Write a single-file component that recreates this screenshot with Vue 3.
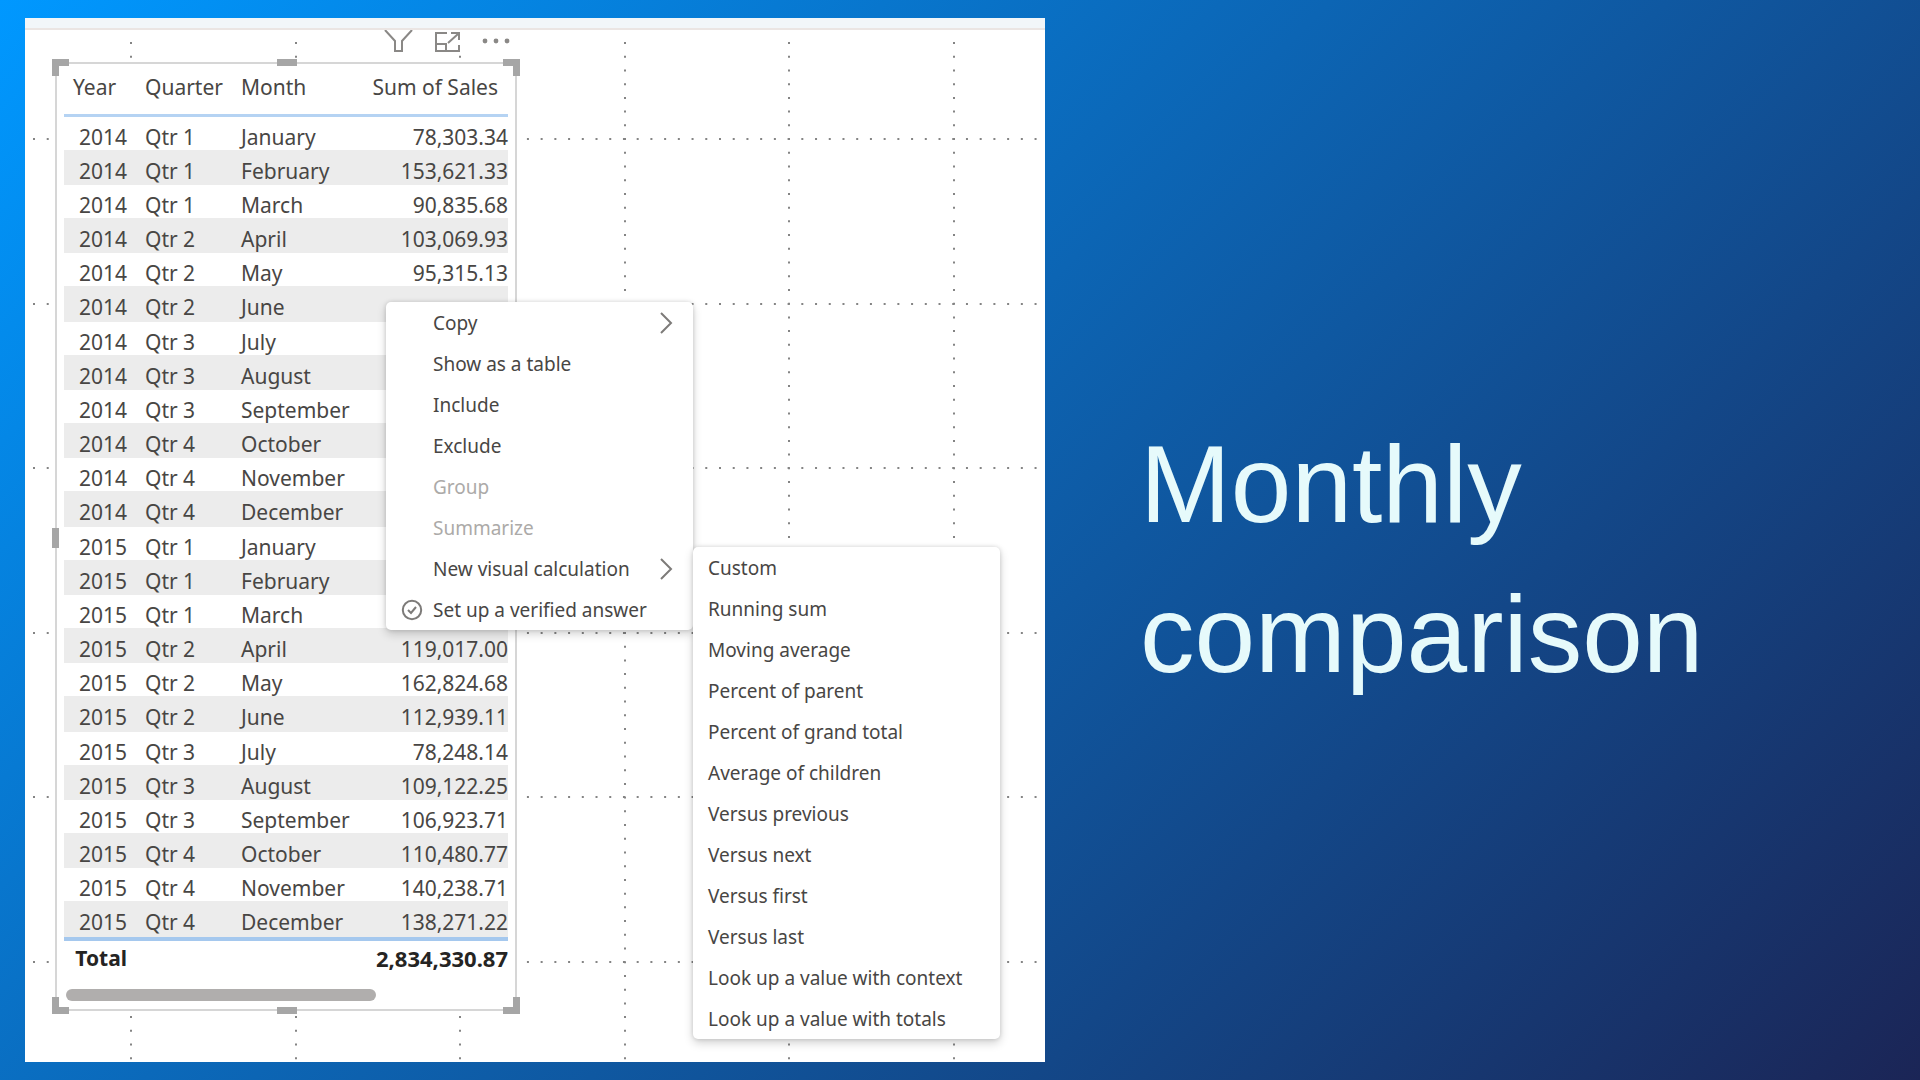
<script setup>
const sales = [
  [2014, 1, 'January', '78,303.34'],
  [2014, 1, 'February', '153,621.33'],
  [2014, 1, 'March', '90,835.68'],
  [2014, 2, 'April', '103,069.93'],
  [2014, 2, 'May', '95,315.13'],
  [2014, 2, 'June', ''],
  [2014, 3, 'July', ''],
  [2014, 3, 'August', ''],
  [2014, 3, 'September', ''],
  [2014, 4, 'October', ''],
  [2014, 4, 'November', ''],
  [2014, 4, 'December', ''],
  [2015, 1, 'January', ''],
  [2015, 1, 'February', ''],
  [2015, 1, 'March', ''],
  [2015, 2, 'April', '119,017.00'],
  [2015, 2, 'May', '162,824.68'],
  [2015, 2, 'June', '112,939.11'],
  [2015, 3, 'July', '78,248.14'],
  [2015, 3, 'August', '109,122.25'],
  [2015, 3, 'September', '106,923.71'],
  [2015, 4, 'October', '110,480.77'],
  [2015, 4, 'November', '140,238.71'],
  [2015, 4, 'December', '138,271.22'],
]

const menuItems = [
  { label: 'Copy', submenu: true },
  { label: 'Show as a table' },
  { label: 'Include' },
  { label: 'Exclude' },
  { label: 'Group', disabled: true },
  { label: 'Summarize', disabled: true },
  { label: 'New visual calculation', submenu: true },
  { label: 'Set up a verified answer', verified: true },
]

const calculations = [
  'Custom',
  'Running sum',
  'Moving average',
  'Percent of parent',
  'Percent of grand total',
  'Average of children',
  'Versus previous',
  'Versus next',
  'Versus first',
  'Versus last',
  'Look up a value with context',
  'Look up a value with totals',
]

const gridColumns = [106, 271, 435, 600, 764, 929]
const gridRows = [121, 286, 450, 615, 779, 944]
const handles = ['nw', 'n', 'ne', 'w', 'sw', 's', 'se']
</script>

<template>
  <main class="slide">
    <section class="report">
      <div class="ribbon"></div>

      <svg class="grid" aria-hidden="true">
        <line v-for="x in gridColumns" :key="'c' + x" :x1="x" :x2="x" y1="24" y2="100%" />
        <line v-for="y in gridRows" :key="'r' + y" x1="8" x2="99.5%" :y1="y" :y2="y" />
      </svg>

      <div class="visual">
        <div class="actions">
          <button type="button" aria-label="Filters">
            <svg width="30" height="24" viewBox="0 0 30 24">
              <path d="M1 0 L11 11 V21 H18 V11 L28 0" />
            </svg>
          </button>
          <button type="button" aria-label="Focus mode">
            <svg width="28" height="24" viewBox="0 0 28 24">
              <path d="M13 3 H2 V21 H25 V15 M2 14 H12 V21 M14 13 L24 4 M17 3 H25 V10" />
            </svg>
          </button>
          <button type="button" aria-label="More options">
            <svg class="dots" width="28" height="24" viewBox="0 0 28 24">
              <circle cx="3" cy="11" r="2.4" />
              <circle cx="14" cy="11" r="2.4" />
              <circle cx="25" cy="11" r="2.4" />
            </svg>
          </button>
        </div>

        <div class="card">
          <i v-for="h in handles" :key="h" class="handle" :class="h"></i>
          <table>
            <colgroup>
              <col class="col-year" />
              <col class="col-quarter" />
              <col class="col-month" />
              <col />
            </colgroup>
            <thead>
              <tr>
                <th scope="col">Year</th>
                <th scope="col">Quarter</th>
                <th scope="col">Month</th>
                <th scope="col" class="amount">Sum of Sales</th>
              </tr>
            </thead>
            <tbody>
              <tr v-for="([year, quarter, month, amount], i) in sales" :key="i">
                <td class="year">{{ year }}</td>
                <td>Qtr {{ quarter }}</td>
                <td>{{ month }}</td>
                <td class="amount">{{ amount }}</td>
              </tr>
            </tbody>
            <tfoot>
              <tr>
                <th scope="row" class="year">Total</th>
                <td></td>
                <td></td>
                <td class="amount">2,834,330.87</td>
              </tr>
            </tfoot>
          </table>
          <div class="scrollbar"></div>
        </div>
      </div>

      <div class="menu context" role="menu">
        <button
          v-for="item in menuItems"
          :key="item.label"
          type="button"
          role="menuitem"
          :disabled="item.disabled"
        >
          <span class="icon">
            <svg v-if="item.verified" width="22" height="22" viewBox="0 0 22 22">
              <circle cx="11" cy="11" r="9.2" />
              <path d="M7 11 L10 14 L15 8" />
            </svg>
          </span>
          <span class="label">{{ item.label }}</span>
          <svg v-if="item.submenu" class="chevron" width="14" height="22" viewBox="0 0 14 22">
            <path d="M2 1 L12 11 L2 21" />
          </svg>
        </button>
      </div>

      <div class="menu calculations" role="menu">
        <button v-for="name in calculations" :key="name" type="button" role="menuitem">
          {{ name }}
        </button>
      </div>
    </section>

    <h1>Monthly<br />comparison</h1>
  </main>
</template>

<style>
body {
  margin: 0;
}
</style>

<style scoped>
.slide {
  box-sizing: border-box;
  display: flex;
  align-items: center;
  min-height: 100vh;
  padding: 18px 25px;
  background: linear-gradient(135deg, #0098ff, #1b2556);
}

.report {
  position: relative;
  flex: 0 1 1020px;
  background: #fff;
  color: #484644;
  font-family: "Noto Sans", "Open Sans", sans-serif;
  overflow: hidden;
}

.ribbon {
  height: 10px;
  background: #f2f6f9;
  border-bottom: 2px solid #ebe5e3;
}

.grid {
  position: absolute;
  inset: 0;
  width: 100%;
  height: 100%;
}

.grid line {
  stroke: #848484;
  stroke-width: 2;
  stroke-dasharray: 2 11.72;
}

.visual {
  position: relative;
  width: 462px;
  margin: 0 0 51px 30px;
}

.actions {
  display: flex;
  justify-content: flex-end;
  gap: 20px;
  height: 32px;
  padding-right: 7px;
}

.actions button {
  display: flex;
  align-items: flex-start;
  height: 24px;
  padding: 0;
  border: 0;
  background: #fff;
}

.actions svg {
  fill: none;
  stroke: #8a8886;
  stroke-width: 2;
}

.actions .dots {
  fill: #8a8886;
  stroke: none;
}

.card {
  position: relative;
  padding: 0 7px 8px;
  border: 2px solid #d6d6d6;
  background: #fff;
}

.handle {
  position: absolute;
  box-sizing: border-box;
  width: 17px;
  height: 17px;
  border: 0 solid #a6a6a6;
}

.nw { top: -5px; left: -5px; border-width: 7px 0 0 7px; }
.ne { top: -5px; right: -5px; border-width: 7px 7px 0 0; }
.sw { bottom: -5px; left: -5px; border-width: 0 0 7px 7px; }
.se { bottom: -5px; right: -5px; border-width: 0 7px 7px 0; }
.n,
.s { left: 220px; width: 20px; height: 7px; background: #a6a6a6; }
.n { top: -5px; }
.s { bottom: -5px; }
.w { top: 464px; left: -5px; width: 7px; height: 20px; background: #a6a6a6; }

table {
  width: 100%;
  border-spacing: 0;
  table-layout: fixed;
  font-size: 21px;
  line-height: 26px;
}

.col-year { width: 73px; }
.col-quarter { width: 96px; }
.col-month { width: 130px; }

th,
td {
  box-sizing: border-box;
  padding: 7px 0 0 8px;
  text-align: left;
  vertical-align: top;
  white-space: nowrap;
  font-weight: 400;
}

th:first-child {
  padding-left: 9px;
}

.year {
  padding-right: 10px;
  text-align: right;
}

.amount {
  text-align: right;
}

thead th {
  height: 53px;
  padding-top: 10px;
  border-bottom: 3px solid #b5d3f3;
}

thead .amount {
  padding-right: 10px;
}

tbody td {
  height: 33px;
}

tbody tr:nth-child(even) td {
  height: 35px;
  padding-top: 8px;
  background: #ececec;
}

tbody tr:nth-child(6n) td {
  height: 36px;
}

tfoot th,
tfoot td {
  height: 40px;
  padding-top: 4px;
  border-top: 4px solid #a5c8ee;
  color: #252423;
  font-weight: 700;
}

tfoot .amount {
  font-size: 22px;
}

.scrollbar {
  width: 310px;
  height: 12px;
  margin: 12px 0 0 2px;
  border-radius: 6px;
  background: #b0aead;
}

.menu {
  position: absolute;
  display: flex;
  flex-direction: column;
  width: 307px;
  border-radius: 5px;
  background: #fff;
  box-shadow: 0 4px 10px rgba(0, 0, 0, 0.18), 0 0 4px rgba(0, 0, 0, 0.14);
}

.context {
  top: 284px;
  left: 361px;
}

.calculations {
  top: 529px;
  left: 668px;
}

.menu button {
  display: flex;
  align-items: center;
  height: 41px;
  padding: 0 20px 0 15px;
  border: 0;
  background: none;
  color: #484644;
  font: 19px/28px "Noto Sans", "Open Sans", sans-serif;
  text-align: left;
  white-space: nowrap;
}

.menu button:disabled {
  color: #acaaa8;
}

.icon {
  display: flex;
  flex: none;
  width: 32px;
}

.label {
  flex: 1;
}

.menu svg {
  fill: none;
  stroke: #7d7b79;
  stroke-width: 2;
}

h1 {
  flex: 1;
  margin: 0;
  padding: 38px 0 0 95px;
  color: #e6fafb;
  font: 400 109px/150px "Liberation Sans", Arial, sans-serif;
}
</style>
